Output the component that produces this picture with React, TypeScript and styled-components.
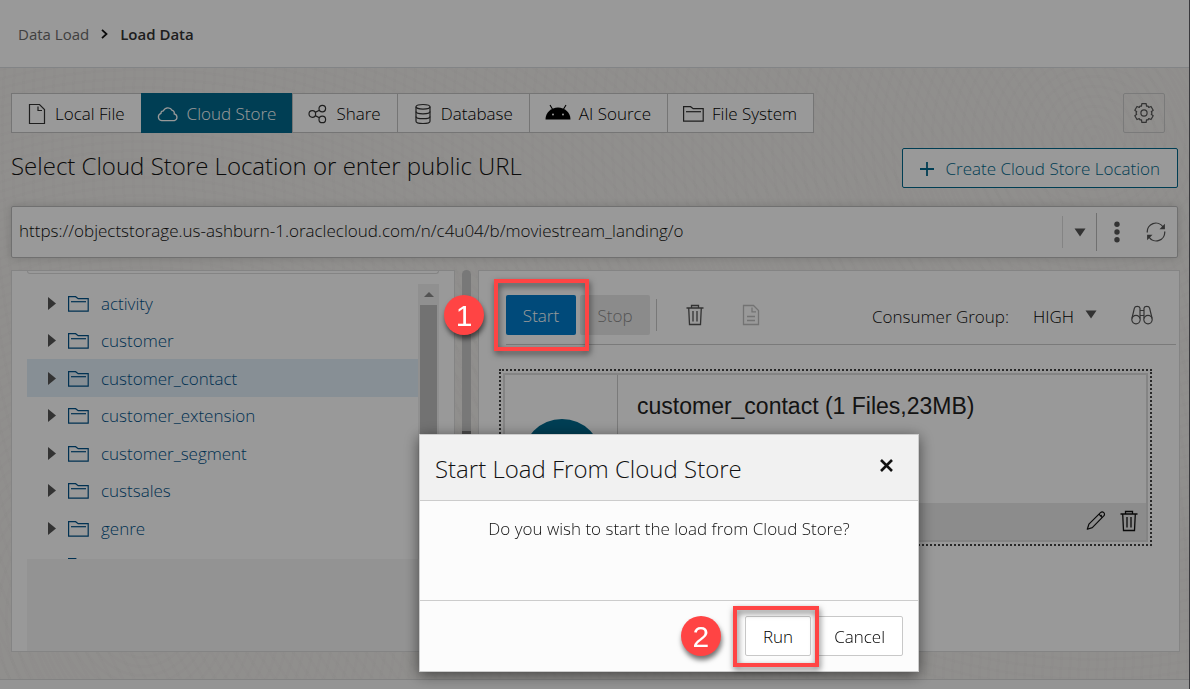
import React from "react";
import styled, { createGlobalStyle, css } from "styled-components";

const GlobalStyle = createGlobalStyle`
  *, *::before, *::after { box-sizing: border-box; }
  html, body, #root { margin: 0; min-height: 100vh; }
  body {
    font-family: "Open Sans", "Noto Sans", sans-serif;
    font-size: 17px;
    font-weight: 300;
    line-height: 24px;
    color: #111;
  }
  button, input, select { font: inherit; color: inherit; }
  button { cursor: pointer; }
  h1, h2, h3, p, ul, ol { margin: 0; padding: 0; font-weight: inherit; }
  svg { display: block; flex: none; }
`;

/* ---------- Icons ---------- */

const line = { fill: "none", stroke: "currentColor" } as const;

const FileIcon = () => (
  <svg width="20" height="22" viewBox="-1 0 20 22" {...line} strokeWidth="1.2">
    <path d="M1.5 1.5h10l5 5v14h-15z" />
    <path d="M10 3.5v4h4" />
  </svg>
);

const CloudIcon = () => (
  <svg width="22" height="16" viewBox="0 0 22 16" {...line} strokeWidth="1.3">
    <path d="M4.6 14.6a3.7 3.7 0 0 1-.6-7.2 2.3 2.3 0 0 1 2.4-2.6A4.9 4.9 0 0 1 15.2 4.4a2.7 2.7 0 0 1 2 3.4 3.5 3.5 0 0 1 .2 6.8z" />
  </svg>
);

const ShareIcon = () => (
  <svg width="20" height="20" viewBox="0 0 20 20" {...line} strokeWidth="1.2">
    <circle cx="4.3" cy="10" r="3.3" />
    <circle cx="14.3" cy="4.6" r="3.3" />
    <circle cx="14.3" cy="15.4" r="3.3" />
    <path d="M7.2 8.4l4.2-2.2M7.2 11.6l4.2 2.2" />
  </svg>
);

const DatabaseIcon = () => (
  <svg width="20" height="22" viewBox="-1 0 20 22" {...line} strokeWidth="1.2">
    <ellipse cx="9" cy="3.8" rx="7" ry="2.3" />
    <path d="M2 3.8v14.4c0 1.3 3.1 2.3 7 2.3s7-1 7-2.3V3.8" />
    <path d="M2 8.6c0 1.3 3.1 2.3 7 2.3s7-1 7-2.3M2 13.4c0 1.3 3.1 2.3 7 2.3s7-1 7-2.3" />
  </svg>
);

const RobotIcon = () => (
  <svg width="26" height="22" viewBox="0 0 26 22" fill="#000">
    <path d="M.5 16.5a12.5 12 0 0 1 25 0z" />
    <path d="M5 2l3 5M21 2l-3 5" fill="none" stroke="#000" strokeWidth="1.1" />
    <circle cx="8" cy="11.6" r="1" fill="#fff" />
    <circle cx="18" cy="11.6" r="1" fill="#fff" />
  </svg>
);

const FolderIcon = () => (
  <svg width="21" height="16" viewBox="0 0 21 16" {...line} strokeWidth="1.2">
    <path d="M.6 15.2V.7h7l2.6 2H20.2v12.5z" />
    <path d="M3 5.7h15" />
  </svg>
);

const gearPath = (() => {
  const points: string[] = [];
  const add = (deg: number, r: number) => {
    const a = (deg * Math.PI) / 180;
    points.push(`${(11 + r * Math.cos(a)).toFixed(2)} ${(11 + r * Math.sin(a)).toFixed(2)}`);
  };
  for (let tooth = 0; tooth < 6; tooth++) {
    const mid = tooth * 60 - 90;
    add(mid - 20, 7.4);
    add(mid - 13, 9.6);
    add(mid + 13, 9.6);
    add(mid + 20, 7.4);
    add(mid + 30, 8);
  }
  return `M${points.join("L")}Z`;
})();

const GearIcon = () => (
  <svg width="22" height="22" viewBox="0 0 22 22" {...line} strokeWidth="1.2" strokeLinejoin="round">
    <path d={gearPath} />
    <circle cx="11" cy="11" r="3.1" />
  </svg>
);

const PlusIcon = () => (
  <svg width="14" height="14" viewBox="0 0 14 14" {...line} strokeWidth="1.8">
    <path d="M7 0v14M0 7h14" />
  </svg>
);

const CaretDown = () => (
  <svg width="12" height="9" viewBox="0 0 12 9" fill="currentColor">
    <path d="M.5.5h11L6 8.5z" />
  </svg>
);

const CaretRight = () => (
  <svg width="8" height="14" viewBox="0 0 8 14" fill="currentColor">
    <path d="M0 0l8 6.5-8 6.5z" />
  </svg>
);

const DotsIcon = () => (
  <svg width="6" height="22" viewBox="0 0 6 22" fill="currentColor">
    <circle cx="3" cy="3.2" r="2.7" />
    <circle cx="3" cy="11" r="2.7" />
    <circle cx="3" cy="18.8" r="2.7" />
  </svg>
);

const RefreshIcon = () => (
  <svg width="20" height="20" viewBox="0 0 20 20" {...line} strokeWidth="1.3">
    <path d="M1.3 10.5A8.6 8.6 0 0 1 17 4.9M18.7 9.5A8.6 8.6 0 0 1 3 15.1" />
    <path d="M18.9 1.8v5.4h-5.4zM1.1 18.2v-5.4h5.4z" fill="currentColor" stroke="none" />
  </svg>
);

const TrashIcon = () => (
  <svg width="18" height="22" viewBox="0 0 18 22" {...line} strokeWidth="1.3">
    <path d="M.5 4h17M5.5 4V1.5h7V4M2.7 4l.8 16.5h11L15.3 4" />
    <path d="M7 7v10.5M11 7v10.5" />
  </svg>
);

const ReportIcon = () => (
  <svg width="18" height="22" viewBox="0 0 18 22" {...line} strokeWidth="1.3">
    <path d="M1.5 1.5h10l5 5v14h-15z" />
    <path d="M10 3.5v4.4h4M5 12.5h8M5 16.5h8" />
  </svg>
);

const BinocularsIcon = () => (
  <svg width="22" height="20" viewBox="0 0 22 20" {...line} strokeWidth="1.2">
    <circle cx="5" cy="14.6" r="4.2" />
    <circle cx="17" cy="14.6" r="4.2" />
    <path d="M.9 13.5L3.4 3.2C4 .8 8.4.8 9 3.2V13.5M21.1 13.5L18.6 3.2C18 .8 13.6.8 13 3.2V13.5" />
    <path d="M9 5.5h4M9 10.5h4" />
  </svg>
);

const PencilIcon = () => (
  <svg width="20" height="20" viewBox="0 0 20 20" {...line} strokeWidth="1.2" strokeLinejoin="round">
    <path d="M1.3 18.2l1.6-5L14.5 1.6a2.2 2.2 0 0 1 3.3 3.3L6.3 16.6z" />
    <path d="M12.9 3.2l3.3 3.3M14.3 5.4l1.4-1.4" />
  </svg>
);

const CloseIcon = () => (
  <svg width="13" height="13" viewBox="0 0 13 13" {...line} strokeWidth="2.6">
    <path d="M1 1l11 11M12 1L1 12" />
  </svg>
);

const ChevronIcon = () => (
  <svg width="7" height="10" viewBox="0 0 7 10" {...line} strokeWidth="1.8">
    <path d="M1 .8L5.5 5 1 9.2" />
  </svg>
);

/* ---------- Page frame ---------- */

const Page = styled.div`
  display: flex;
  flex-direction: column;
  min-height: 100vh;
  border-right: 1px solid #606066;
  background-color: #f0eeeb;
  background-image:
    repeating-radial-gradient(circle at 12% 90%, rgba(0, 0, 0, 0.008) 0 3px, transparent 3px 9px),
    repeating-radial-gradient(circle at 92% 20%, rgba(0, 0, 0, 0.008) 0 3px, transparent 3px 10px);
`;

const Header = styled.header`
  display: flex;
  align-items: center;
  height: 68px;
  padding: 0 18px;
  background: #fff;
  border-bottom: 1px solid #d9dce0;
`;

const Crumbs = styled.nav`
  display: flex;
  align-items: center;
  gap: 12px;
  font-size: 15px;
  font-weight: 400;
`;

const CrumbLink = styled.a`
  color: #6b6b6b;
  text-decoration: none;
`;

const CrumbCurrent = styled.span`
  font-weight: 600;
  color: #333;
`;

const Main = styled.main`
  display: flex;
  flex-direction: column;
  flex: 1;
  padding-top: 25px;
`;

const Row = styled.div`
  display: flex;
  justify-content: space-between;
  padding: 0 11px;
`;

const Footer = styled.footer`
  height: 10px;
  background: #f7f7f7;
  border-top: 1px solid #d9d9d9;
`;

/* ---------- Source tabs ---------- */

const Tabs = styled.div`
  display: flex;
`;

const Tab = styled.button<{ $active?: boolean }>`
  display: flex;
  align-items: center;
  gap: 8px;
  height: 40px;
  padding: 1px 16px 0 15px;
  border: 1px solid #c4c4c4;
  border-right-width: 0;
  background: #fff;
  color: #000;
  white-space: nowrap;
  &:last-child { border-right-width: 1px; }
  svg { color: #333; }
  ${(p) =>
    p.$active &&
    css`
      background: #00688c;
      border-color: #00688c;
      color: #fff;
      svg { color: #fff; }
    `}
`;

const SettingsButton = styled.button`
  display: grid;
  place-items: center;
  width: 42px;
  height: 40px;
  margin-right: 13px;
  padding: 0;
  border: 1px solid #ccc;
  border-radius: 2px;
  background: transparent;
  color: #555;
`;

const TitleRow = styled(Row)`
  padding-top: 15px;
`;

const Title = styled.h1`
  font-size: 24px;
  line-height: 36px;
`;

const CreateButton = styled.button`
  display: flex;
  align-items: center;
  gap: 12px;
  height: 40px;
  padding: 1px 17px 0;
  border: 1px solid #00688c;
  border-radius: 2px;
  background: #fff;
  color: #00688c;
`;

/* ---------- Location bar ---------- */

const LocationRow = styled(Row)`
  padding-top: 18px;
`;

const LocationBar = styled.div`
  display: flex;
  align-items: center;
  flex: 1;
  height: 52px;
  padding-right: 1px;
  border: 1px solid #bbb;
  border-radius: 2px;
  background: #fff;
  box-shadow: 0 0 8px rgba(0, 0, 0, 0.15);
`;

const LocationInput = styled.input`
  flex: 1;
  min-width: 0;
  height: 48px;
  padding: 0 7px 3px;
  border: 0;
  background: transparent;
  outline: 0;
`;

const BarButton = styled.button<{ $divider?: boolean }>`
  display: grid;
  place-items: center;
  width: 40px;
  height: 38px;
  padding: 0;
  border: 0;
  border-left: ${(p) => (p.$divider ? "1px solid #bbb" : "0")};
  background: transparent;
  color: #555;
`;

const CaretButton = styled(BarButton)`
  width: 34px;
  height: 32px;
  border-color: #ddd;
`;

/* ---------- Workspace ---------- */

const Workspace = styled.div`
  display: flex;
  flex: 1;
  padding: 12px 9px 27px 11px;
`;

const Panel = styled.section`
  background: #fff;
  border: 1px solid #ddd;
`;

const TreePanel = styled(Panel)`
  display: flex;
  flex-direction: column;
  width: 444px;
  padding: 0 15px;
`;

const TreeTop = styled.div`
  height: 3px;
  border: 1px solid #ddd;
  border-top: 0;
  border-radius: 0 0 3px 3px;
`;

const TreeViewport = styled.div`
  display: flex;
  height: 285px;
  padding-top: 10px;
  overflow: hidden;
`;

const TreeList = styled.ul`
  display: grid;
  grid-auto-rows: 1fr;
  flex: 1;
  height: 300px;
  list-style: none;
`;

const TreeItem = styled.li<{ $selected?: boolean }>`
  display: flex;
  align-items: center;
  gap: 12px;
  padding: 2px 0 0 21px;
  background: ${(p) => (p.$selected ? "#e2eef8" : "transparent")};
  color: #555;
`;

const TreeLink = styled.a`
  display: flex;
  align-items: center;
  gap: 12px;
  color: #005289;
  text-decoration: none;
`;

const TreeEmpty = styled.div`
  flex: 1;
  background: #f6f6f6;
`;

const ScrollTrack = styled.div`
  display: flex;
  flex-direction: column;
  align-items: center;
  width: 21px;
  background: #f0f0f0;
  color: #8a8a8a;
`;

const ScrollArrow = styled.div`
  display: grid;
  place-items: center;
  height: 21px;
`;

const ScrollThumb = styled.div`
  width: 17px;
  height: 180px;
  background: #bebebe;
`;

const Gutter = styled.div`
  display: flex;
  justify-content: center;
  width: 23px;
`;

const Splitter = styled.div`
  width: 9px;
  border-radius: 5px;
  background: linear-gradient(#c8c8c8 161px, #7f7f7f 161px 220px, #c8c8c8 220px);
`;

const JobPanel = styled(Panel)`
  flex: 1;
  min-width: 0;
  padding-left: 27px;
`;

const Toolbar = styled.div`
  display: flex;
  align-items: center;
  height: 74px;
  margin-right: 3px;
  padding: 14px 23px 0 0;
  border-bottom: 1px solid #ccc;
`;

const ToolbarInner = styled.div`
  display: flex;
  align-items: center;
  flex: 1;
  height: 40px;
  gap: 4px;
`;

const StepAnchor = styled.div`
  position: relative;
`;

const ActionButton = styled.button<{ $primary?: boolean }>`
  width: 70px;
  height: 40px;
  padding: 3px 0 0;
  border: 0;
  border-radius: 2px;
  background: ${(p) => (p.$primary ? "#007ccb" : "#e8e8e8")};
  color: ${(p) => (p.$primary ? "#fff" : "#8c8c8c")};
`;

const Divider = styled.div`
  width: 1px;
  height: 32px;
  margin: 0 8px 0 2px;
  background: #c8c8c8;
`;

const ToolButton = styled.button`
  display: grid;
  place-items: center;
  width: 52px;
  height: 40px;
  padding: 0;
  border: 0;
  background: transparent;
  color: #555;
  &:disabled { color: #c0c0c0; }
`;

const GroupLabel = styled.label`
  margin-left: auto;
  padding-top: 4px;
`;

const GroupSelect = styled.select`
  width: 48px;
  height: 32px;
  margin-left: 20px;
  padding: 4px 0 0;
  border: 0;
  appearance: none;
  background: transparent;
  color: #000;
`;

const GroupCaret = styled.span`
  color: #555;
`;

const SearchButton = styled(ToolButton)`
  width: 22px;
  margin-left: 30px;
`;

const Card = styled.article`
  margin: 24px 27px 0 -7px;
  padding: 2px;
  border: 2px dotted #444;
`;

const CardInner = styled.div`
  display: grid;
  grid-template-columns: 113px 1fr;
  grid-template-rows: 128px 37px;
  border: 2px solid #ddd;
`;

const CardThumb = styled.div`
  display: flex;
  align-items: flex-end;
  justify-content: center;
  padding: 0 0 4px 2px;
  border-right: 1px solid #ccc;
`;

const CardStatus = styled.div`
  width: 80px;
  height: 80px;
  border-radius: 50%;
  background: #00688c;
`;

const CardTitle = styled.h3`
  padding: 17px 19px;
  font-family: "Liberation Sans", Arial, sans-serif;
  font-size: 23px;
  line-height: 28px;
  color: #222;
`;

const CardFooter = styled.div`
  grid-column: 1 / -1;
  display: flex;
  align-items: center;
  justify-content: flex-end;
  gap: 14px;
  padding: 0 8px 2px 0;
  background: #e9e9e9;
`;

const CardAction = styled.button`
  padding: 0;
  border: 0;
  background: transparent;
  color: #111;
`;

/* ---------- Dialog ---------- */

const Scrim = styled.div`
  position: fixed;
  inset: 0;
  z-index: 10;
  background: rgba(0, 0, 0, 0.4);
`;

const Dialog = styled.div`
  position: fixed;
  top: 434px;
  left: 419px;
  z-index: 11;
  width: 500px;
  border: 1px solid #ccc;
  background: #fcfcfc;
  box-shadow: 0 3px 14px rgba(0, 0, 0, 0.55);
`;

const DialogHeader = styled.div`
  display: flex;
  justify-content: space-between;
  height: 66px;
  padding: 16px 25px 0 15px;
  border-bottom: 1px solid #ccc;
  background: #f1f1f1;
`;

const DialogTitle = styled.h2`
  font-size: 24px;
  line-height: 36px;
`;

const CloseButton = styled.button`
  display: grid;
  place-items: center;
  width: 13px;
  height: 28px;
  padding: 0;
  border: 0;
  background: transparent;
`;

const DialogBody = styled.p`
  height: 100px;
  padding-top: 16px;
  border-bottom: 1px solid #ccc;
  text-align: center;
`;

const DialogFooter = styled.div`
  display: flex;
  justify-content: flex-end;
  gap: 5px;
  padding: 15px;
`;

const DialogButton = styled.button`
  height: 40px;
  padding: 1px 17px 0;
  border: 1px solid #c8c8c8;
  border-radius: 2px;
  background: #fff;
  color: #000;
`;

/* ---------- Step callouts ---------- */

const StepFrame = styled.span<{ $inset: string }>`
  position: absolute;
  inset: ${(p) => p.$inset};
  z-index: 12;
  border: 4px solid #ff4444;
  filter: drop-shadow(1px 3px 3px rgba(0, 0, 0, 0.55));
  pointer-events: none;
`;

const StepBadge = styled.span<{ $left: number }>`
  position: absolute;
  top: 0;
  left: ${(p) => p.$left}px;
  z-index: 13;
  width: 40px;
  height: 40px;
  border-radius: 50%;
  background: #ff4444;
  box-shadow: 1px 4px 5px rgba(0, 0, 0, 0.55);
  color: #fff;
  font-family: "Liberation Sans", Arial, sans-serif;
  font-size: 30px;
  line-height: 42px;
  text-align: center;
`;

const folders = [
  "activity",
  "customer",
  "customer_contact",
  "customer_extension",
  "customer_segment",
  "custsales",
  "genre",
];

const tabs = [
  { label: "Local File", icon: <FileIcon /> },
  { label: "Cloud Store", icon: <CloudIcon />, active: true },
  { label: "Share", icon: <ShareIcon /> },
  { label: "Database", icon: <DatabaseIcon /> },
  { label: "AI Source", icon: <RobotIcon /> },
  { label: "File System", icon: <FolderIcon /> },
];

export default function App() {
  return (
    <>
      <GlobalStyle />
      <Page>
        <Header>
          <Crumbs>
            <CrumbLink href="#data-load">Data Load</CrumbLink>
            <ChevronIcon />
            <CrumbCurrent>Load Data</CrumbCurrent>
          </Crumbs>
        </Header>
        <Main>
          <Row>
            <Tabs>
              {tabs.map((t) => (
                <Tab key={t.label} $active={t.active}>
                  {t.icon}
                  {t.label}
                </Tab>
              ))}
            </Tabs>
            <SettingsButton aria-label="Settings">
              <GearIcon />
            </SettingsButton>
          </Row>
          <TitleRow>
            <Title>Select Cloud Store Location or enter public URL</Title>
            <CreateButton>
              <PlusIcon />
              Create Cloud Store Location
            </CreateButton>
          </TitleRow>
          <LocationRow>
            <LocationBar>
              <LocationInput
                aria-label="Cloud store location"
                defaultValue="https://objectstorage.us-ashburn-1.oraclecloud.com/n/c4u04/b/moviestream_landing/o"
              />
              <CaretButton $divider aria-label="Show locations">
                <CaretDown />
              </CaretButton>
              <BarButton $divider aria-label="More actions">
                <DotsIcon />
              </BarButton>
              <BarButton aria-label="Refresh">
                <RefreshIcon />
              </BarButton>
            </LocationBar>
          </LocationRow>
          <Workspace>
            <TreePanel>
              <TreeTop />
              <TreeViewport>
                <TreeList>
                  {folders.map((name) => (
                    <TreeItem key={name} $selected={name === "customer_contact"}>
                      <CaretRight />
                      <TreeLink href={`#${name}`}>
                        <FolderIcon />
                        {name}
                      </TreeLink>
                    </TreeItem>
                  ))}
                  <TreeItem>
                    <CaretRight />
                    <TreeLink href="#next" aria-label="Next folder">
                      <FolderIcon />
                    </TreeLink>
                  </TreeItem>
                </TreeList>
                <ScrollTrack>
                  <ScrollArrow>
                    <svg width="10" height="5" viewBox="0 0 10 5" fill="currentColor">
                      <path d="M0 5l5-5 5 5z" />
                    </svg>
                  </ScrollArrow>
                  <ScrollThumb />
                </ScrollTrack>
              </TreeViewport>
              <TreeEmpty />
            </TreePanel>
            <Gutter>
              <Splitter />
            </Gutter>
            <JobPanel>
              <Toolbar>
                <ToolbarInner>
                  <StepAnchor>
                    <ActionButton $primary>Start</ActionButton>
                    <StepFrame $inset="-16px -13px -16px -12px" />
                    <StepBadge $left={-62}>1</StepBadge>
                  </StepAnchor>
                  <ActionButton disabled>Stop</ActionButton>
                  <Divider />
                  <ToolButton aria-label="Delete">
                    <TrashIcon />
                  </ToolButton>
                  <ToolButton aria-label="Report" disabled>
                    <ReportIcon />
                  </ToolButton>
                  <GroupLabel htmlFor="group">Consumer Group:</GroupLabel>
                  <GroupSelect id="group" defaultValue="HIGH">
                    <option>HIGH</option>
                    <option>MEDIUM</option>
                    <option>LOW</option>
                  </GroupSelect>
                  <GroupCaret>
                    <CaretDown />
                  </GroupCaret>
                  <SearchButton aria-label="Find">
                    <BinocularsIcon />
                  </SearchButton>
                </ToolbarInner>
              </Toolbar>
              <Card>
                <CardInner>
                  <CardThumb>
                    <CardStatus />
                  </CardThumb>
                  <CardTitle>customer_contact (1 Files,23MB)</CardTitle>
                  <CardFooter>
                    <CardAction aria-label="Edit">
                      <PencilIcon />
                    </CardAction>
                    <CardAction aria-label="Remove">
                      <TrashIcon />
                    </CardAction>
                  </CardFooter>
                </CardInner>
              </Card>
            </JobPanel>
          </Workspace>
        </Main>
        <Footer />
      </Page>
      <Scrim />
      <Dialog role="dialog" aria-labelledby="dialog-title">
        <DialogHeader>
          <DialogTitle id="dialog-title">Start Load From Cloud Store</DialogTitle>
          <CloseButton aria-label="Close">
            <CloseIcon />
          </CloseButton>
        </DialogHeader>
        <DialogBody>Do you wish to start the load from Cloud Store?</DialogBody>
        <DialogFooter>
          <StepAnchor>
            <DialogButton>Run</DialogButton>
            <StepFrame $inset="-10px -8px -11px -12px" />
            <StepBadge $left={-64}>2</StepBadge>
          </StepAnchor>
          <DialogButton>Cancel</DialogButton>
        </DialogFooter>
      </Dialog>
    </>
  );
}
